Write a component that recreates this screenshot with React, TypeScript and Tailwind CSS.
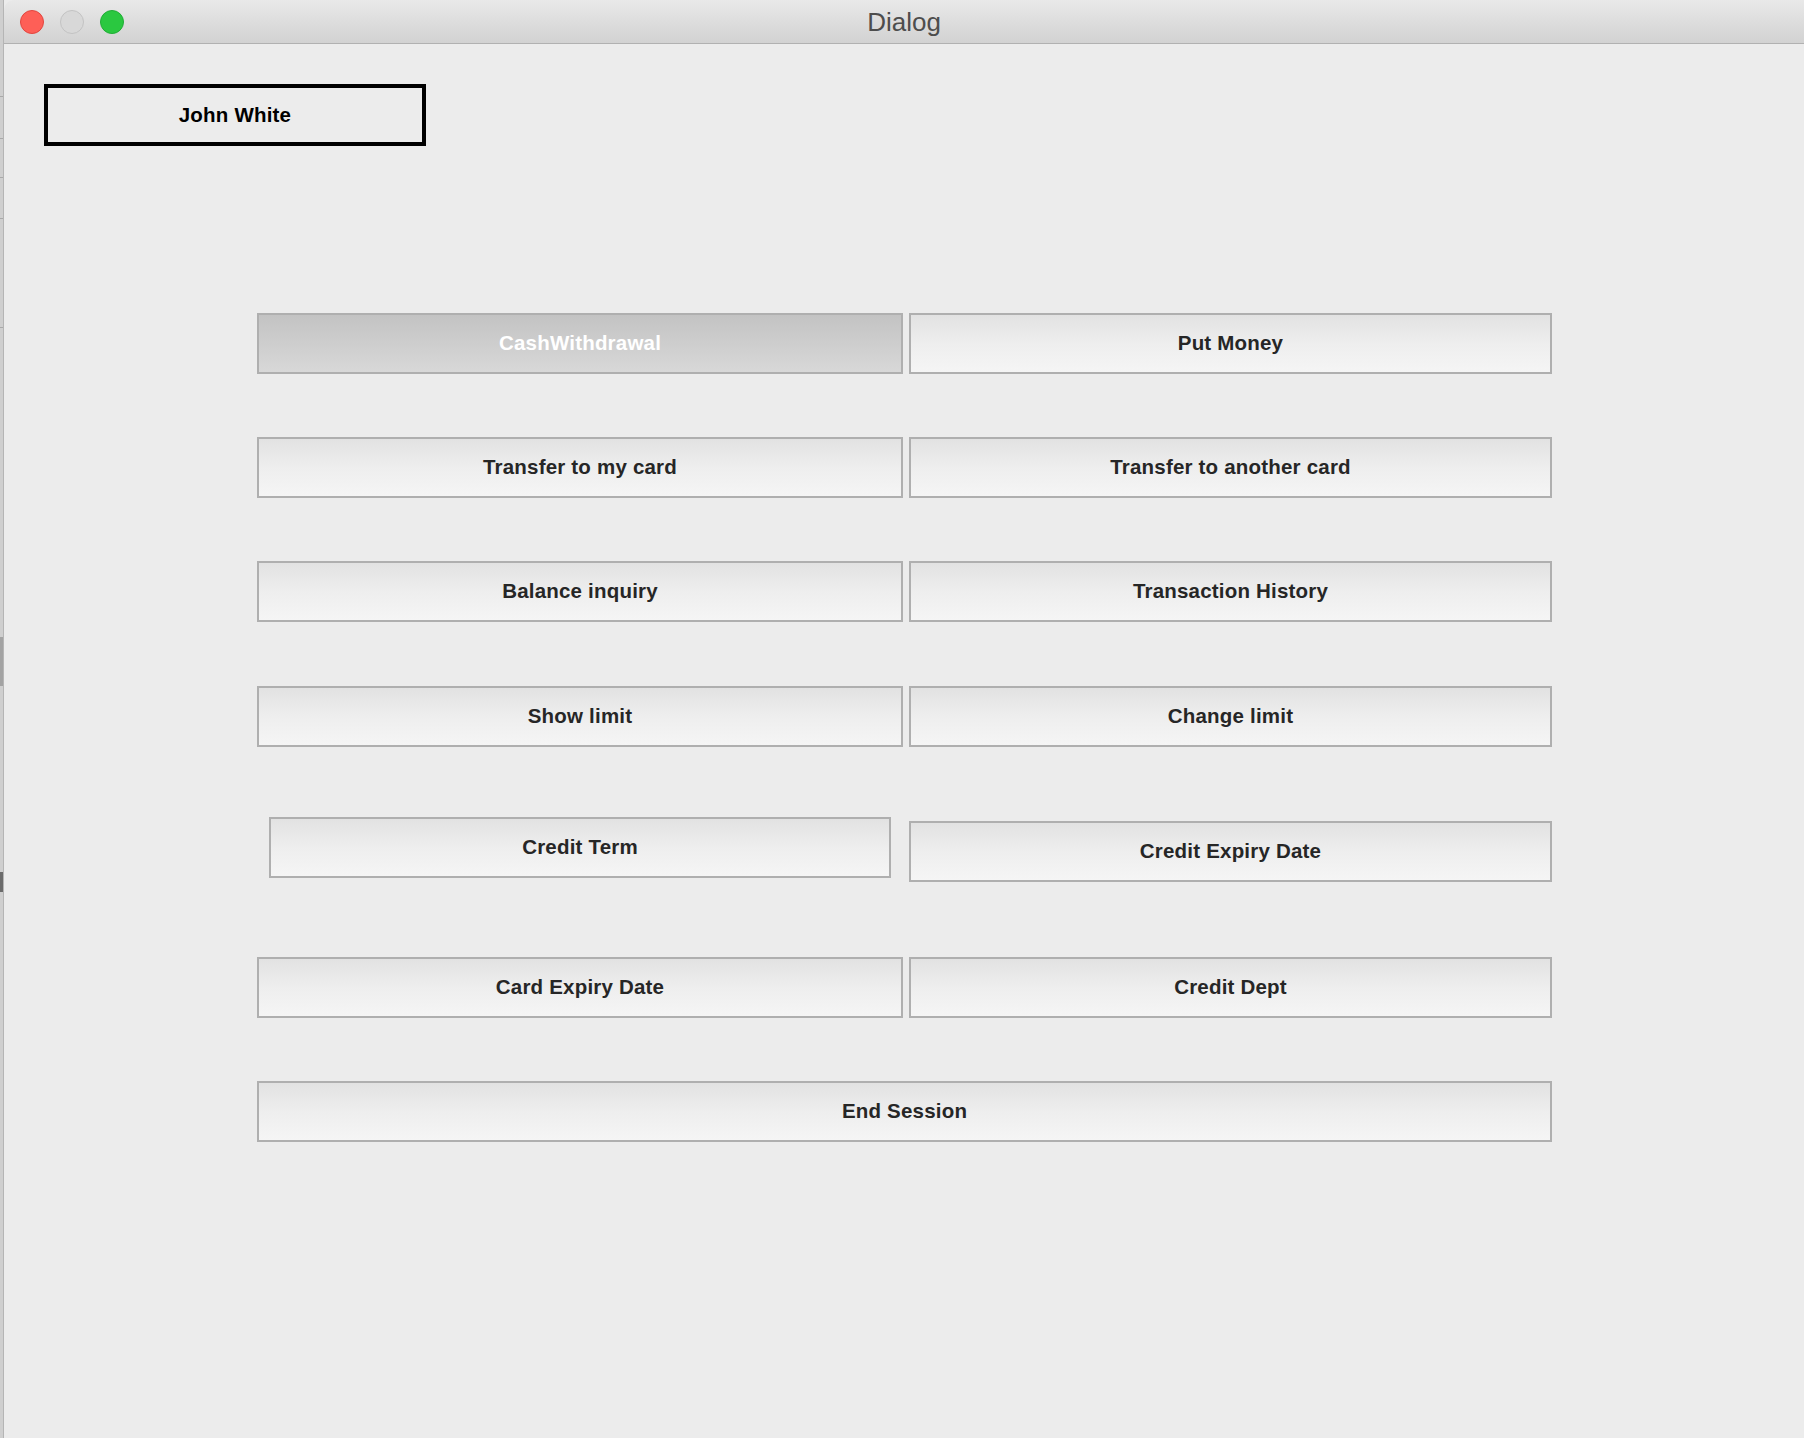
import type { ReactNode } from "react";

const FONT = "font-['Liberation_Sans',Arial,Helvetica,sans-serif]";

function AtmButton({ children, pressed = false }: { children: ReactNode; pressed?: boolean }) {
  return (
    <button
      type="button"
      className={
        "flex h-[61px] w-full items-center justify-center border-2 border-[#afafaf] text-[20.5px] font-bold tracking-[0.2px] " +
        FONT +
        (pressed
          ? " bg-gradient-to-b from-[#c3c3c3] to-[#d8d8d8] text-white"
          : " bg-gradient-to-b from-[#e2e2e2] via-[#eeeeee] to-[#f5f5f5] text-[#262626]")
      }
    >
      {children}
    </button>
  );
}

function Row({ left, right, className = "" }: { left: ReactNode; right: ReactNode; className?: string }) {
  return (
    <div className={"flex items-start gap-[6px] " + className}>
      <div className="w-[646px]">{left}</div>
      <div className="w-[643px]">{right}</div>
    </div>
  );
}

export default function App() {
  return (
    <div className="flex h-[1438px] w-[1804px] overflow-hidden bg-[#ececec]">
      {/* sliver of the window behind */}
      <div className="flex w-[3px] flex-col bg-[#cfcfcf]">
        <div className="h-[96px]" />
        <div className="h-px bg-[#a9a9a9]" />
        <div className="h-[41px]" />
        <div className="h-px bg-[#a9a9a9]" />
        <div className="h-[38px]" />
        <div className="h-px bg-[#a9a9a9]" />
        <div className="h-[40px]" />
        <div className="h-px bg-[#a9a9a9]" />
        <div className="h-[108px]" />
        <div className="h-px bg-[#a9a9a9]" />
        <div className="h-[309px]" />
        <div className="h-[49px] bg-[#a3a3a3]" />
        <div className="h-[186px]" />
        <div className="h-[20px] bg-[#6b6b6b]" />
      </div>

      <div className="flex flex-1 flex-col border-l border-[#b5b5b5]">
        <div className="grid h-[44px] grid-cols-[1fr_auto_1fr] items-center rounded-tl-[10px] border-b border-[#b1b1b1] bg-gradient-to-b from-[#e9e9e9] to-[#d2d2d2]">
          <div className="flex items-center gap-[16px] pl-[16px]">
            <span className="h-[24px] w-[24px] rounded-full border border-[#e2463f] bg-[#fe5f57]" />
            <span className="h-[24px] w-[24px] rounded-full border border-[#c3c3c3] bg-[#d8d8d8]" />
            <span className="h-[24px] w-[24px] rounded-full border border-[#20ad36] bg-[#2ac840]" />
          </div>
          <span className={"text-[26px] leading-none text-[#4d4d4d] " + FONT}>Dialog</span>
          <div />
        </div>

        <div className="flex flex-col pl-[40px] pt-[40px]">
          <div
            className={
              "flex h-[62px] w-[382px] items-center justify-center border-4 border-black text-[20.5px] font-bold tracking-[0.2px] text-black " +
              FONT
            }
          >
            John White
          </div>

          <div className="ml-[213px] mt-[167px] flex flex-col">
            <Row
              left={<AtmButton pressed>CashWithdrawal</AtmButton>}
              right={<AtmButton>Put Money</AtmButton>}
            />
            <Row
              className="mt-[63px]"
              left={<AtmButton>Transfer to my card</AtmButton>}
              right={<AtmButton>Transfer to another card</AtmButton>}
            />
            <Row
              className="mt-[63px]"
              left={<AtmButton>Balance inquiry</AtmButton>}
              right={<AtmButton>Transaction History</AtmButton>}
            />
            <Row
              className="mt-[64px]"
              left={<AtmButton>Show limit</AtmButton>}
              right={<AtmButton>Change limit</AtmButton>}
            />
            <Row
              className="mt-[70px]"
              left={
                <div className="px-[12px]">
                  <AtmButton>Credit Term</AtmButton>
                </div>
              }
              right={
                <div className="pt-[4px]">
                  <AtmButton>Credit Expiry Date</AtmButton>
                </div>
              }
            />
            <Row
              className="mt-[75px]"
              left={<AtmButton>Card Expiry Date</AtmButton>}
              right={<AtmButton>Credit Dept</AtmButton>}
            />
            <div className="mt-[63px] w-[1295px]">
              <AtmButton>End Session</AtmButton>
            </div>
          </div>
        </div>
      </div>
    </div>
  );
}
